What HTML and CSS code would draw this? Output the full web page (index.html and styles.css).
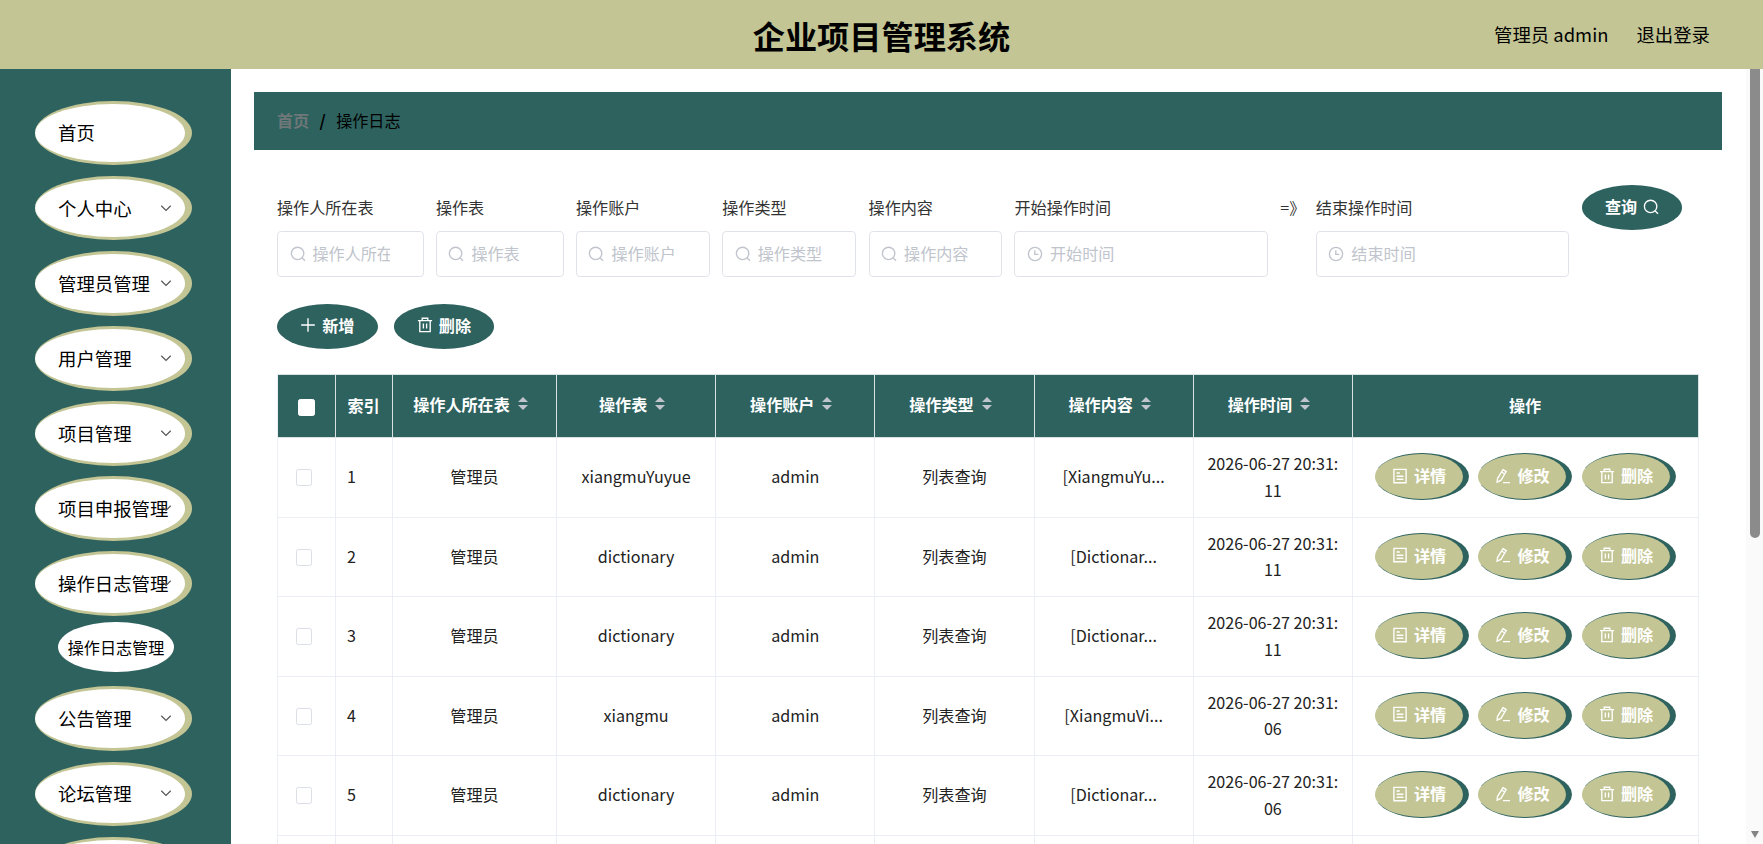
FILE: index.html
```html
<!DOCTYPE html>
<html lang="zh-CN">
<head>
<meta charset="utf-8">
<title>企业项目管理系统</title>
<link rel="stylesheet" href="styles.css">
</head>
<body>
<svg class="sprite" aria-hidden="true">
  <symbol id="i-search" viewBox="0 0 16 16"><circle cx="7.6" cy="7.4" r="6.2"/><path d="M12.2 12 15 14.8"/></symbol>
  <symbol id="i-clock" viewBox="0 0 16 16"><circle cx="8" cy="8" r="6.6"/><path d="M7.8 4.2v4.2h3.6"/></symbol>
  <symbol id="i-plus" viewBox="0 0 16 16"><path d="M8 1.2v13.6M1.2 8h13.6"/></symbol>
  <symbol id="i-trash" viewBox="0 0 16 16"><path d="M.9 3.6h14.2M5.2 3.4V1.2h5.6v2.2M2.8 3.8v10.8h10.4V3.8M6.4 6.6v5M9.6 6.6v5"/></symbol>
  <symbol id="i-doc" viewBox="0 0 16 16"><path d="M1.9 1.3h12.2v13.4H1.9zM4.6 5h3.2M4.6 8.2h6.8M4.6 11.2h6.8"/></symbol>
  <symbol id="i-edit" viewBox="0 0 16 16"><path d="M8 1.7 11.2 3.6 5.9 12.4 2.1 14.2 2.5 10.6zM6.6 4l3.2 2M8 14.6h7"/></symbol>
  <symbol id="i-down" viewBox="0 0 16 16"><path d="M2.6 5.4 8 10.8l5.4-5.4"/></symbol>
</svg>
<header class="topbar">
  <h1 class="topbar-title">企业项目管理系统</h1>
  <div class="topbar-user"><span>管理员 admin</span><span>退出登录</span></div>
</header>
<div class="layout">
  <aside class="sidebar" id="sidebar"></aside>
  <main class="main">
    <nav class="crumb"><span class="crumb-home">首页</span><b class="crumb-sep">/</b><span>操作日志</span></nav>
    <section class="content">
      <form class="search" id="search"></form>
      <div class="tools">
        <button class="pill"><svg class="icon"><use href="#i-plus"/></svg>新增</button>
        <button class="pill"><svg class="icon"><use href="#i-trash"/></svg>删除</button>
      </div>
      <table class="grid">
        <colgroup><col class="c-check"><col class="c-index"><col class="c-from"><col class="c-std"><col class="c-std"><col class="c-std"><col class="c-std"><col class="c-std"><col class="c-ops"></colgroup>
        <thead><tr id="head"></tr></thead>
        <tbody id="rows"></tbody>
      </table>
    </section>
  </main>
  <div class="scroll"><div class="scroll-thumb"></div><div class="scroll-down"></div></div>
</div>
<script src="app.js"></script>
</body>
</html>
```
FILE: styles.css
```css
* { box-sizing: border-box; }
body {
  margin: 0;
  height: 844px;
  overflow: hidden;
  background: #fff;
  color: #222;
  font: 16.1px/26.45px "Noto Sans CJK SC", sans-serif;
}
.sprite { position: absolute; width: 0; height: 0; }
.icon {
  width: 16px;
  height: 16px;
  flex: none;
  fill: none;
  stroke: currentColor;
  stroke-width: 1.35;
}
.topbar {
  height: 69px;
  display: grid;
  grid-template-columns: 1fr auto 1fr;
  align-items: center;
  background: #c3c594;
  color: #000;
}
.topbar-title {
  grid-column: 2;
  margin: 0;
  font-size: 32.2px;
  line-height: 46px;
  font-weight: 700;
}
.topbar-user {
  display: flex;
  justify-content: flex-end;
  gap: 28px;
  padding: 0 53px 0 0;
  font-size: 18.4px;
}
.layout { display: flex; height: 775px; }
.sidebar {
  width: 231px;
  flex: none;
  padding: 32px 39px 0 35px;
  background: #2e625f;
  overflow: hidden;
}
.menu-item {
  height: 64.4px;
  margin-bottom: 10.7px;
  display: flex;
  align-items: center;
  justify-content: space-between;
  padding: 0 12px 1px 23px;
  border: solid #c3c594;
  border-width: 3px 7px 3px 0;
  border-radius: 50%;
  background: #fff;
  color: #000;
  font-size: 18.4px;
  white-space: nowrap;
}
.menu-item .icon { width: 14px; height: 14px; margin-left: -14px; color: #555; }
.menu-item.open { margin-bottom: 6px; }
.submenu-item {
  width: 116px;
  height: 50.6px;
  margin: 0 0 14px 23px;
  display: flex;
  align-items: center;
  justify-content: center;
  border-radius: 50%;
  background: #fff;
  color: #000;
  white-space: nowrap;
}
.main { flex: 1; min-width: 0; padding: 23px 24px 0 23px; overflow: hidden; }
.crumb {
  height: 58px;
  display: flex;
  align-items: center;
  padding: 0 23px 1px;
  background: #2e625f;
  color: #000;
}
.crumb-home { color: #6f7778; font-weight: 700; }
.crumb-sep { margin: 0 10px; width: 7px; text-align: center; }
.content { padding: 35px 22px 0 23px; }
.search { display: flex; align-items: flex-start; }
.field { flex: none; margin-right: 12.3px; }
.field-label { height: 46px; line-height: 44px; color: #333; }
.field-box {
  height: 46px;
  display: flex;
  align-items: center;
  padding: 0 33px 1px 11.5px;
  border: 1px solid #dfe2e8;
  border-radius: 4.6px;
  color: #c0c4cc;
}
.field-box .icon { margin-right: 7px; }
.field-text { flex: 1; overflow: hidden; white-space: nowrap; }
.field-arrow { flex: none; width: 35.5px; line-height: 44px; color: #333; white-space: nowrap; }
.pill {
  width: 100.6px;
  height: 45px;
  flex: none;
  display: flex;
  align-items: center;
  justify-content: center;
  gap: 6px;
  padding: 0 0 2px;
  border: 0;
  border-radius: 50%;
  background: #2e625f;
  color: #fff;
  font: inherit;
  font-weight: 700;
}
.tools { display: flex; gap: 16px; margin: 26.6px 0 25.8px; }
.grid {
  width: 1422px;
  table-layout: fixed;
  border-collapse: separate;
  border-spacing: 0;
  border-left: 1px solid #ebeef5;
}
.c-check { width: 58px; }
.c-index { width: 57px; }
.c-from { width: 164px; }
.c-std { width: 159.2px; }
.c-ops { width: 346px; }
.grid th {
  height: 64px;
  padding: 0 1px 2px 0;
  background: #2e625f;
  color: #fff;
  border: solid #d9e2e2;
  border-width: 1px 1px 1px 0;
  font-weight: 700;
}
.grid td {
  height: 79.5px;
  padding: 0 11px 2px;
  border: solid #ebeef5;
  border-width: 0 1px 1px 0;
  text-align: center;
  word-break: break-all;
}
.grid td.index { text-align: left; }
.th-sort { display: flex; align-items: center; justify-content: center; padding: 0 7px 3px 0; }
.sort { margin-left: 8px; display: grid; gap: 3px; }
.sort::before, .sort::after { content: ""; border: 5.75px solid transparent; }
.sort::before { border-top: 0; border-bottom-color: #c0c4cc; }
.sort::after { border-bottom: 0; border-top-color: #c0c4cc; }
.box {
  display: block;
  width: 16px;
  height: 17px;
  margin: 2px 0 0 7px;
  border: 1px solid #dcdfe6;
  border-radius: 2.3px;
  background: #fff;
}
th .box { margin: 4px 0 0 20px; border-color: #fff; width: 17px; }
.ops { display: flex; justify-content: center; gap: 9.5px; }
.op {
  width: 94px;
  height: 47px;
  display: flex;
  align-items: center;
  justify-content: center;
  gap: 6px;
  padding: 0 0 2px;
  border: solid #2e625f;
  border-width: 1px 6px 1px 0;
  border-radius: 50%;
  background: #c3c594;
  color: #fff;
  font: inherit;
  font-weight: 700;
}
.scroll {
  width: 17px;
  flex: none;
  display: flex;
  flex-direction: column;
  align-items: center;
  justify-content: space-between;
  background: #fafafa;
}
.scroll-thumb { width: 10px; height: 469px; border-radius: 0 0 5px 5px; background: #8b8b8b; }
.scroll-down { margin-bottom: 6px; border: solid transparent; border-width: 7px 4.5px 0; border-top-color: #858585; }
```
FILE: app.js
```js
const icon = (name) => `<svg class="icon"><use href="#i-${name}"/></svg>`;

const menu = ['首页', '个人中心', '管理员管理', '用户管理', '项目管理', '项目申报管理', '操作日志管理', '公告管理', '论坛管理', ''];
document.getElementById('sidebar').innerHTML = menu.map((name, i) => {
  const open = name === '操作日志管理';
  return `<div class="menu-item${open ? ' open' : ''}">${name}${i ? icon('down') : ''}</div>` +
    (open ? '<div class="submenu-item">操作日志管理</div>' : '');
}).join('');

// [label, placeholder, icon, input width]
const fields = [
  ['操作人所在表', '操作人所在表', 'search', 146.6],
  ['操作表', '操作表', 'search', 127.8],
  ['操作账户', '操作账户', 'search', 134],
  ['操作类型', '操作类型', 'search', 134],
  ['操作内容', '操作内容', 'search', 133.6],
  ['开始操作时间', '开始时间', 'clock', 253.6],
  ['结束操作时间', '结束时间', 'clock', 253.6],
];
document.getElementById('search').innerHTML = fields.map(([label, hint, ic, w], i) =>
  (i === 6 ? '<span class="field-arrow">=》</span>' : '') +
  `<div class="field" style="width:${w}px"><div class="field-label">${label}</div>` +
  `<div class="field-box">${icon(ic)}<span class="field-text">${hint}</span></div></div>`
).join('') + `<button class="pill">查询${icon('search')}</button>`;

const sortable = ['操作人所在表', '操作表', '操作账户', '操作类型', '操作内容', '操作时间'];
document.getElementById('head').innerHTML = '<th><span class="box"></span></th><th>索引</th>' +
  sortable.map((t) => `<th><div class="th-sort">${t}<span class="sort"></span></div></th>`).join('') + '<th>操作</th>';

const rows = [
  ['xiangmuYuyue', '[XiangmuYu...', '11'],
  ['dictionary', '[Dictionar...', '11'],
  ['dictionary', '[Dictionar...', '11'],
  ['xiangmu', '[XiangmuVi...', '06'],
  ['dictionary', '[Dictionar...', '06'],
];
document.getElementById('rows').innerHTML = rows.map(([table, text, sec], i) =>
  `<tr><td><span class="box"></span></td><td class="index">${i + 1}</td><td>管理员</td><td>${table}</td>` +
  `<td>admin</td><td>列表查询</td><td>${text}</td><td>2026-06-27 20:31:${sec}</td>` +
  `<td><div class="ops"><button class="op">${icon('doc')}详情</button><button class="op">${icon('edit')}修改</button>` +
  `<button class="op">${icon('trash')}删除</button></div></td></tr>`
).join('') + `<tr>${'<td></td>'.repeat(9)}</tr>`;
```
